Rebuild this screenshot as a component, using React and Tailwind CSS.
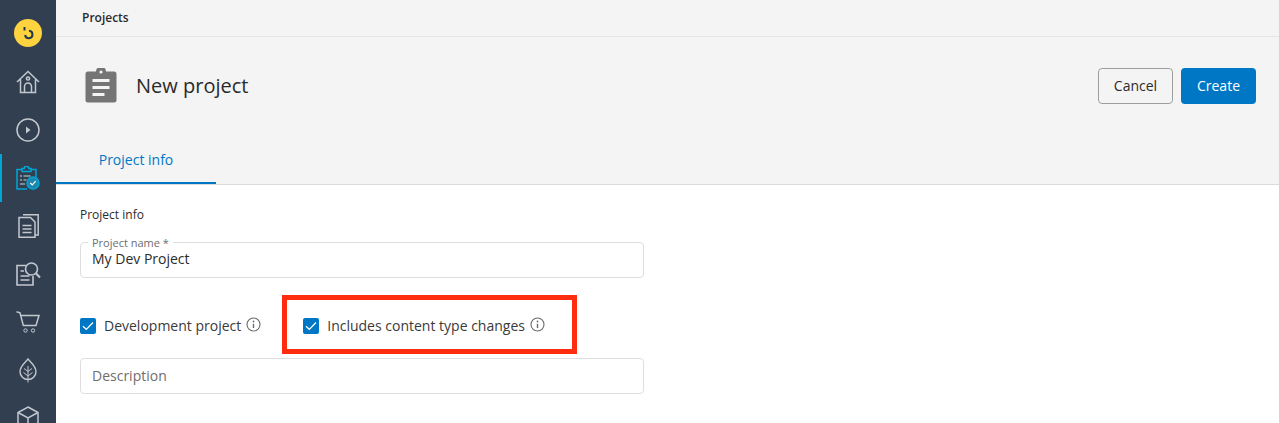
import React from 'react';

const Info = () => (
  <svg width="15" height="15" viewBox="0 0 15 15" fill="none" className="shrink-0">
    <circle cx="7.500" cy="7.500" r="6.500" stroke="#6b6b6b" strokeWidth="1.100" />
    <path d="M7.500 6.800V11" stroke="#6b6b6b" strokeWidth="1.400" />
    <circle cx="7.500" cy="4.500" r="0.900" fill="#6b6b6b" />
  </svg>
);

const CheckBox = () => (
  <span className="w-4 h-4 rounded-[2px] bg-[#0077c5] flex items-center justify-center shrink-0">
    <svg width="14" height="14" viewBox="0 0 14 14" fill="none">
      <path d="M2 7.300L5.300 10.300L12 3.500" stroke="#fff" strokeWidth="1.200" />
    </svg>
  </span>
);

const stroke = '#c3c8cf';

const navIcons = [
  // home
  <svg key="home" width="24" height="24" viewBox="0 0 24 24" fill="none" stroke={stroke} strokeWidth="1.500">
    <path d="M1 12L12 1.500 23 12M4.500 9.500V22.500h15V9.500" />
    <path d="M8.500 22.500v-6a3.500 3.500 0 0 1 7 0v6" />
    <circle cx="12" cy="8.500" r="1.600" />
  </svg>,
  // play
  <svg key="play" width="24" height="24" viewBox="0 0 24 24" fill="none" stroke={stroke} strokeWidth="1.500">
    <circle cx="12" cy="12" r="11" />
    <path d="M10 8.500l4.500 3.500-4.500 3.500z" fill={stroke} stroke="none" />
  </svg>,
  // projects (active)
  <svg key="projects" width="24" height="24" viewBox="0 0 24 24" fill="none" stroke="#00a7d4" strokeWidth="1.500">
    <path d="M11 23H1V3.500h5M15 3.500h5v8" />
    <path d="M6 5.500V2.500h2.200a1.900 1.900 0 0 1 4.600 0H15v3z" />
    <path d="M4 10h2M7.500 10h7M4 14h2M7.500 14h3M4 18h5" strokeWidth="1.100" stroke="#c3dbe5" />
    <circle cx="17" cy="17" r="6" fill="#1f87ad" stroke="#00a7d4" />
    <path d="M14.300 17l2 2 3.400-3.800" stroke="#fff" strokeWidth="1.200" />
  </svg>,
  // document
  <svg key="doc" width="21" height="24" viewBox="0 0 21 24" fill="none" stroke={stroke} strokeWidth="1.500">
    <path d="M5 .8h15.200V21H17" />
    <path d="M1 3.500h11.500l4.500 4.500v15.200H1z" />
    <path d="M4.500 11.500h9M4.500 15h9M4.500 18.500h9" strokeWidth="1.300" />
  </svg>,
  // doc search
  <svg key="search" width="25" height="24" viewBox="0 0 25 24" fill="none" stroke={stroke} strokeWidth="1.600">
    <path d="M10 3.500H1v19.500h16v-9" />
    <path d="M4.500 9H8M4.500 14h9M4.500 18h9" strokeWidth="1.300" />
    <circle cx="15.500" cy="7" r="6" />
    <path d="M19.800 11.300L24 15.500" strokeWidth="2" />
  </svg>,
  // cart
  <svg key="cart" width="24" height="23" viewBox="0 0 24 23" fill="none" stroke={stroke} strokeWidth="1.500">
    <path d="M.5 .8l3.500 1 3.300 12.700h12.700L23 4.500H5" />
    <circle cx="9.500" cy="19.500" r="1.700" strokeWidth="1" />
    <circle cx="17" cy="19.500" r="1.700" strokeWidth="1" />
  </svg>,
  // leaf
  <svg key="leaf" width="20" height="25" viewBox="0 0 20 25" fill="none" stroke={stroke} strokeWidth="1.400">
    <path d="M10 1c3 3.500 8 7.500 8 12.500a8 8 0 0 1-16 0C2 8.500 7 4.500 10 1z" />
    <path d="M10 8v16.500M10 13.500l-4-3M10 13.500l4-3M10 18l-4.500-3.500M10 18l4.500-3.500" strokeWidth="1" />
  </svg>,
  // box
  <svg key="box" width="22" height="25" viewBox="0 0 22 25" fill="none" stroke={stroke} strokeWidth="1.500">
    <path d="M11 1l10 5.500v12L11 24 1 18.500v-12z" />
    <path d="M1 6.500l10 5.500 10-5.500M11 12v12" />
  </svg>,
];

const App = () => {
  return (
    <div className="relative h-[423px] w-[1279px] overflow-hidden flex bg-white font-['Open_Sans',sans-serif] text-[#2b2b2b]">
      {/* sidebar */}
      <div className="w-14 h-full shrink-0 bg-[#323f50] flex flex-col items-center pt-[19px]">
        <div className="w-7 h-7 shrink-0 rounded-full bg-[#ffd23f] flex items-center justify-center mb-[11px]">
          <svg width="14" height="14" viewBox="0 0 14 14" fill="none" stroke="#1c3a4a" strokeWidth="2">
            <path d="M3.500 1v3.500" />
            <path d="M8 4.800a3.700 3.700 0 1 1-3.900 4.200" />
          </svg>
        </div>
        {navIcons.map((icon, i) => (
          <div
            key={i}
            className={`w-14 h-12 shrink-0 flex items-center justify-center ${i === 2 ? 'border-l-2 border-[#00a7d4] pr-[2px]' : ''}`}
          >
            {icon}
          </div>
        ))}
      </div>

      <div className="flex-1 flex flex-col min-w-0">
        {/* breadcrumb */}
        <div className="h-[37px] shrink-0 bg-[#f4f4f4] border-b border-[#e6e6e6] pl-[26px] flex items-center text-xs font-semibold pb-[1px]">
          Projects
        </div>

        {/* title row */}
        <div className="h-[148px] shrink-0 bg-[#f4f4f4] border-b border-[#dcdcdc] flex flex-col">
          <div className="h-[98px] flex items-center justify-between pl-[29px] pr-[23px] pt-[1px]">
            <div className="flex items-center gap-[19px]">
              <svg width="32" height="36" viewBox="0 0 32 36" fill="#757575">
                <path d="M3 3.500h8a5 5 0 0 1 10 0h8a2.500 2.500 0 0 1 2.500 2.500v26a2.500 2.500 0 0 1-2.500 2.500H3A2.500 2.500 0 0 1 .5 32V6A2.500 2.500 0 0 1 3 3.500z" />
                <circle cx="16" cy="4" r="1.600" fill="#f4f4f4" />
                <path d="M7.500 11h17v3h-17zM7.500 18h17v3h-17zM7.500 25h12v3h-12z" fill="#f4f4f4" />
              </svg>
              <span className="text-xl leading-7">New project</span>
            </div>
            <div className="flex items-center gap-2">
              <button className="w-[75px] h-9 rounded border border-[#9e9e9e] text-sm">Cancel</button>
              <button className="w-[75px] h-9 rounded bg-[#0077c5] text-white text-sm font-medium">Create</button>
            </div>
          </div>
          <div className="flex-1 flex items-end">
            <div className="w-40 h-[50px] border-b-2 border-[#0077c5] flex items-center justify-center text-sm text-[#0077c5] pt-[3px]">
              Project info
            </div>
          </div>
        </div>

        {/* form */}
        <div className="flex-1 pl-6 pt-[21px]">
          <div className="text-xs leading-[18px]">Project info</div>
          <div className="relative mt-[18px] w-[564px] h-[36px] rounded border border-[#dedede] flex items-center px-[11px] text-sm">
            <span className="absolute left-[7px] -top-[7px] px-1 bg-white text-[11px] leading-[13px] text-[#6e6e6e]">Project name *</span>
            <span className="pb-[3px]">My Dev Project</span>
          </div>
          <div className="flex items-center mt-9 h-[24px] text-sm">
            <CheckBox />
            <span className="ml-2 text-[#3a3a3a]">Development project</span>
            <span className="ml-[5px] -mt-[3px]"><Info /></span>
            <span className="ml-[42px]"><CheckBox /></span>
            <span className="ml-2 text-[#3a3a3a]">Includes content type changes</span>
            <span className="ml-[5px] -mt-[3px]"><Info /></span>
          </div>
          <div className="mt-5 w-[564px] h-[36px] rounded border border-[#dedede] flex items-center px-[11px] text-sm text-[#6e6e6e]">
            Description
          </div>
        </div>
      </div>

      {/* annotation box */}
      <div className="absolute left-[282px] top-[295px] w-[295px] h-[59px] border-[5px] border-[#ff2d0f]" />
    </div>
  );
};

export default App;
